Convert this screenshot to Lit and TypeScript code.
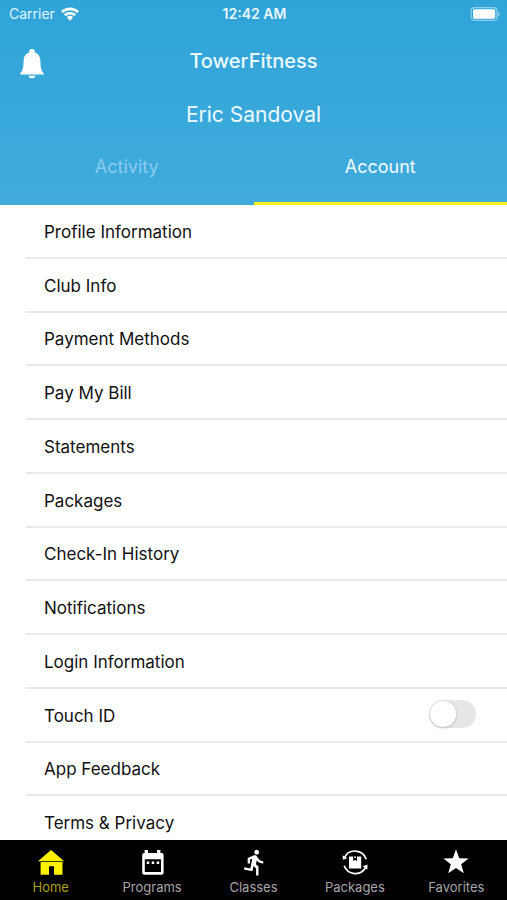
import { LitElement, html, css, svg } from "lit";
import { customElement, state } from "lit/decorators.js";
import { classMap } from "lit/directives/class-map.js";

const navItems = [
  {
    label: "Home",
    icon: svg`<path d="M14 1 27.2 12.2H.9Z"/><path d="M3.6 13h21.9v12.7H17v-8.4h-5v8.4H3.6Z"/>`,
  },
  {
    label: "Programs",
    icon: svg`<path fill-rule="evenodd" d="M6.6 4V1H10v3h9V1h3.4v3h1.2a2 2 0 0 1 2 2v17.7a2 2 0 0 1-2 2H6.2a2 2 0 0 1-2-2V6a2 2 0 0 1 2-2ZM6.8 10.2v12.900h16.200V10.2Z"/><path d="M8.7 12.4h2.5v2.5H8.7ZM13.7 12.4h2.5v2.5h-2.5ZM18.7 12.4h2.5v2.5h-2.5Z"/>`,
  },
  {
    label: "Classes",
    icon: svg`<path transform="translate(1.5 -1) scale(1.2)" d="M13.49 5.48c1.1 0 2-.9 2-2s-.9-2-2-2-2 .9-2 2 .9 2 2 2zm-3.6 13.9l1-4.4 2.1 2v6h2v-7.5l-2.1-2 .6-3c1.3 1.5 3.3 2.5 5.5 2.5v-2c-1.9 0-3.5-1-4.3-2.4l-1-1.6c-.4-.6-1-1-1.7-1-.3 0-.5.1-.8.1l-5.2 2.2v4.7h2v-3.4l1.8-.7-1.6 8.1-4.9-1-.4 2 7 1.4z"/>`,
  },
  {
    label: "Packages",
    icon: svg`<path d="M8 7.500h4.200v4.500l1.900-.9 1.900.9V7.500h4.200v12H8Z"/><path d="M13.300 7.500h1.700v1.500h-1.700Z"/><path fill="none" stroke="currentColor" stroke-width="1.700" d="M3.200 9a11.800 11.800 0 0 1 22 1.200M24.800 18.200a11.800 11.800 0 0 1-21.600-1.400"/><path d="M1.500 6.200 2 10.800l4.300-1.500ZM26.300 20.800l.2-5.200-4.900 1.700Z"/>`,
  },
  {
    label: "Favorites",
    icon: svg`<path d="m14 .3 3.200 8.900 9.400.3-7.400 5.800 2.600 9-7.800-5.200-7.800 5.200 2.600-9L1.400 9.500l9.400-.3Z"/>`,
  },
];

const accountRows = [
  "Profile Information",
  "Club Info",
  "Payment Methods",
  "Pay My Bill",
  "Statements",
  "Packages",
  "Check-In History",
  "Notifications",
  "Login Information",
  "Touch ID",
  "App Feedback",
  "Terms & Privacy",
];

@customElement("app-root")
export class AppRoot extends LitElement {
  @state() private tab = "Account";
  @state() private section = "Home";

  static styles = css`
    :host {
      display: flex;
      flex-direction: column;
      height: 100vh;
      background: #fff;
      color: #111;
      font-family: Inter, "Liberation Sans", sans-serif;
    }
    * {
      box-sizing: border-box;
    }
    button {
      margin: 0;
      padding: 0;
      border: 0;
      background: none;
      color: inherit;
      font: inherit;
      cursor: pointer;
    }
    svg {
      display: block;
      fill: currentColor;
    }
    .header {
      flex: none;
      background: linear-gradient(#2fa4d9, #40abdb);
      color: #fff;
    }
    .status,
    .title-bar {
      display: grid;
      grid-template-columns: 1fr auto 1fr;
      align-items: center;
    }
    .status {
      height: 28px;
      padding: 0 7px 0 9px;
      font-size: 14px;
      line-height: 16px;
    }
    .carrier {
      display: flex;
      align-items: center;
      gap: 6px;
      color: #e2f3fb;
    }
    .time {
      font-weight: 600;
      color: #eaf7fd;
    }
    .battery {
      justify-self: end;
    }
    .title-bar {
      height: 66px;
      padding: 0 20px;
    }
    .bell {
      justify-self: start;
      padding-top: 5px;
    }
    h1,
    h2 {
      margin: 0;
      text-align: center;
      color: #eefaff;
    }
    h1 {
      font-size: 20px;
      line-height: 24px;
      font-weight: 500;
    }
    h2 {
      font-size: 21px;
      line-height: 42px;
      font-weight: 400;
    }
    .tabs {
      display: grid;
      grid-template-columns: 1fr 1fr;
    }
    .tab {
      padding-bottom: 4px;
      border-bottom: 3px solid transparent;
      font-size: 18px;
      line-height: 62px;
      color: #8ccbef;
    }
    .tab.active {
      border-color: #f4f01c;
      color: #f2fbff;
    }
    .content {
      flex: 1;
      min-height: 0;
      overflow-y: auto;
      scrollbar-width: none;
    }
    .rows {
      display: grid;
      grid-auto-rows: 1fr;
      min-height: 645px;
      margin: 0;
      padding: 0 0 0 26px;
      list-style: none;
      font-size: 17px;
      line-height: 20px;
    }
    .row {
      display: flex;
      border-bottom: 2px solid #e9e9e9;
    }
    .row-body {
      flex: 1;
      display: flex;
      align-items: center;
      justify-content: space-between;
      padding: 2px 31px 0 18px;
      text-align: left;
    }
    .switch {
      appearance: none;
      width: 47px;
      height: 28px;
      margin: 0 0 4px;
      border-radius: 14px;
      background: #e6e6e8;
      cursor: pointer;
    }
    .switch::before {
      content: "";
      display: block;
      width: 26px;
      height: 26px;
      margin: 1px;
      border-radius: 50%;
      background: #fff;
      box-shadow: 0 1px 3px #0003;
    }
    .switch:checked {
      background: #34c759;
    }
    .switch:checked::before {
      margin-left: 20px;
    }
    .nav {
      flex: none;
      display: grid;
      grid-template-columns: repeat(5, 1fr);
      height: 60px;
      background: #000;
      color: #fff;
    }
    .nav-item {
      display: flex;
      flex-direction: column;
      align-items: center;
      justify-content: flex-start;
      padding-top: 9px;
      gap: 2px;
    }
    .nav-label {
      font-size: 13px;
      line-height: 16px;
      color: #a6a6a6;
    }
    .nav-item.current {
      color: #fff100;
    }
    .nav-item.current .nav-label {
      color: #a9a013;
    }
  `;

  private renderRow(label: string) {
    return html`<li class="row">
      ${label === "Touch ID"
        ? html`<label class="row-body">${label}<input class="switch" type="checkbox" role="switch" /></label>`
        : html`<button class="row-body">${label}</button>`}
    </li>`;
  }

  render() {
    return html`
      <header class="header">
        <div class="status">
          <span class="carrier">
            Carrier
            <svg width="18" height="14" viewBox="0 0 18 14" aria-hidden="true">
              <path d="M0 4.2a13 13 0 0 1 18 0l-1.7 1.9a10.5 10.5 0 0 0-14.6 0ZM2.9 7.3a9 9 0 0 1 12.2 0L13.3 9.2a6.3 6.3 0 0 0-8.6 0ZM5.8 10.3a4.7 4.7 0 0 1 6.4 0L9 13.8Z" fill="#fff" />
            </svg>
          </span>
          <span class="time">12:42 AM</span>
          <svg class="battery" width="30" height="14" viewBox="0 0 30 14" aria-hidden="true">
            <rect x="1.2" y=".6" width="25.8" height="12.8" rx="3.5" fill="none" stroke="#8fd0ee" stroke-width="1.2" />
            <rect x="3" y="2.3" width="22.2" height="9.4" rx="1.5" fill="#fff" />
            <path d="M28 4.800c2.200.6 2.200 3.800 0 4.400Z" fill="#8fd0ee" />
          </svg>
        </div>
        <div class="title-bar">
          <button class="bell" aria-label="Notifications">
            <svg width="24" height="30" viewBox="0 0 24 30" aria-hidden="true">
              <path d="M12 0a2.8 2.8 0 0 1 2.8 3.5C18.6 4.7 20.3 7.8 20.4 12c.1 6.5.8 9.3 3.4 12.6.2.5 0 .9-.5.9H.7c-.5 0-.7-.4-.5-.9C2.8 21.3 3.5 18.5 3.6 12c.1-4.2 1.8-7.3 5.6-8.500A2.8 2.8 0 0 1 12 0Z" />
              <path d="M8.4 26.7h7.2c-.5 3.5-6.7 3.5-7.2 0Z" />
            </svg>
          </button>
          <h1>TowerFitness</h1>
        </div>
        <h2>Eric Sandoval</h2>
        <div class="tabs" role="tablist">
          ${["Activity", "Account"].map(
            (name) => html`<button
              class=${classMap({ tab: true, active: this.tab === name })}
              role="tab"
              aria-selected=${this.tab === name}
              @click=${() => (this.tab = name)}
            >${name}</button>`
          )}
        </div>
      </header>
      <main class="content">
        <ul class="rows">${accountRows.map((label) => this.renderRow(label))}</ul>
      </main>
      <nav class="nav">
        ${navItems.map(
          ({ label, icon }) => html`<button
            class=${classMap({ "nav-item": true, current: this.section === label })}
            @click=${() => (this.section = label)}
          >
            <svg width="28" height="28" viewBox="0 0 28 28" aria-hidden="true">${icon}</svg>
            <span class="nav-label">${label}</span>
          </button>`
        )}
      </nav>
    `;
  }
}
